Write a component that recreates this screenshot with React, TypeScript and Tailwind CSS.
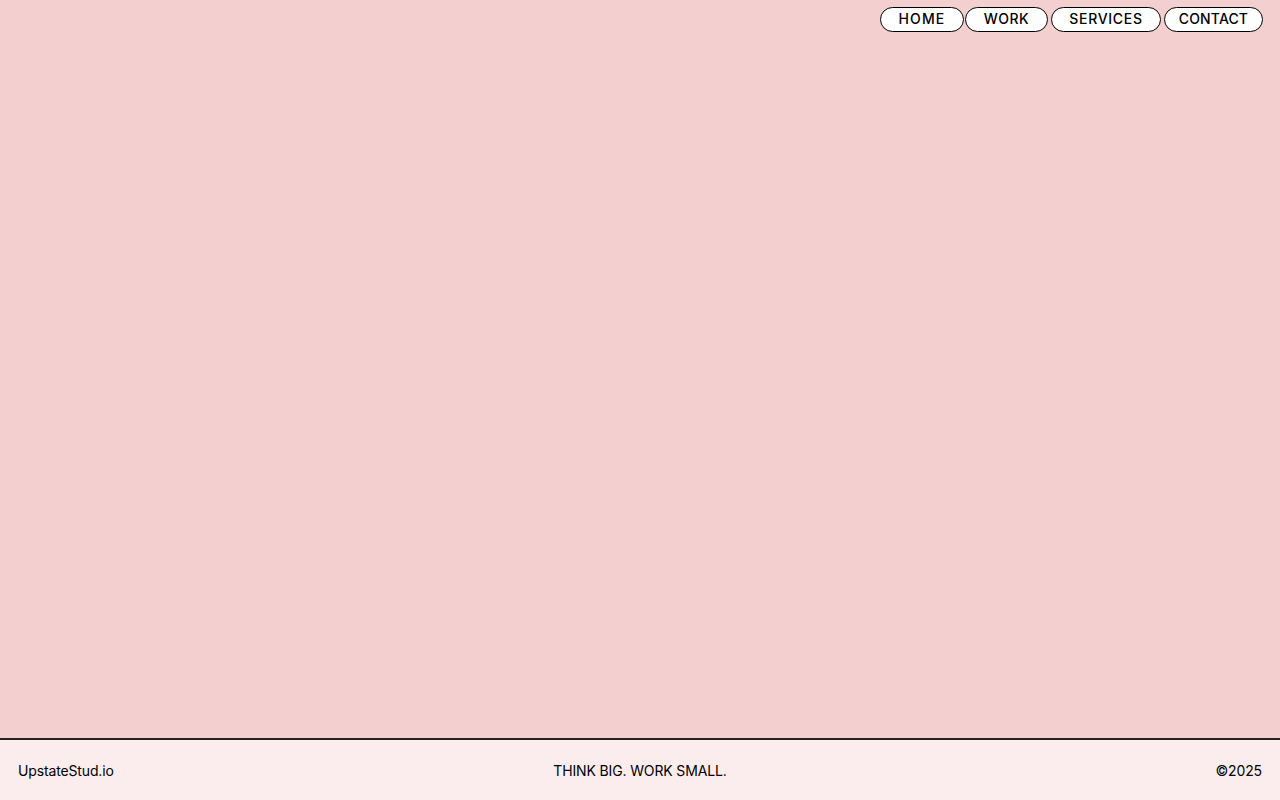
export default function App() {
  const links = [
    { label: "HOME", cls: "w-[84px] tracking-[0.08em]" },
    { label: "WORK", cls: "ml-[1px] w-[83px] tracking-[0.04em]" },
    { label: "SERVICES", cls: "ml-[3px] w-[110px] tracking-[0.05em]" },
    { label: "CONTACT", cls: "ml-[3px] w-[99px] tracking-[0.01em]" },
  ];
  return (
    <div
      className="flex h-[800px] w-full flex-col bg-[#f4cfcf] text-black"
      style={{ fontFamily: "Inter, 'Noto Sans', sans-serif" }}
    >
      <header className="flex justify-end pr-[17px] pt-[7px]">
        <nav className="flex">
          {links.map((l) => (
            <a
              key={l.label}
              href="#"
              className={`flex h-[25px] items-center justify-center rounded-full border border-black bg-white pb-[2px] text-[14px] font-medium leading-none ${l.cls}`}
            >
              {l.label}
            </a>
          ))}
        </nav>
      </header>
      <main className="flex-1" />
      <footer className="grid h-[62px] grid-cols-3 items-center border-t-2 border-[#222] bg-[#fbeded] px-[18px] text-[14px] tracking-[-0.01em]">
        <span>UpstateStud.io</span>
        <span className="text-center">THINK BIG. WORK SMALL.</span>
        <span className="text-right">©2025</span>
      </footer>
    </div>
  );
}
